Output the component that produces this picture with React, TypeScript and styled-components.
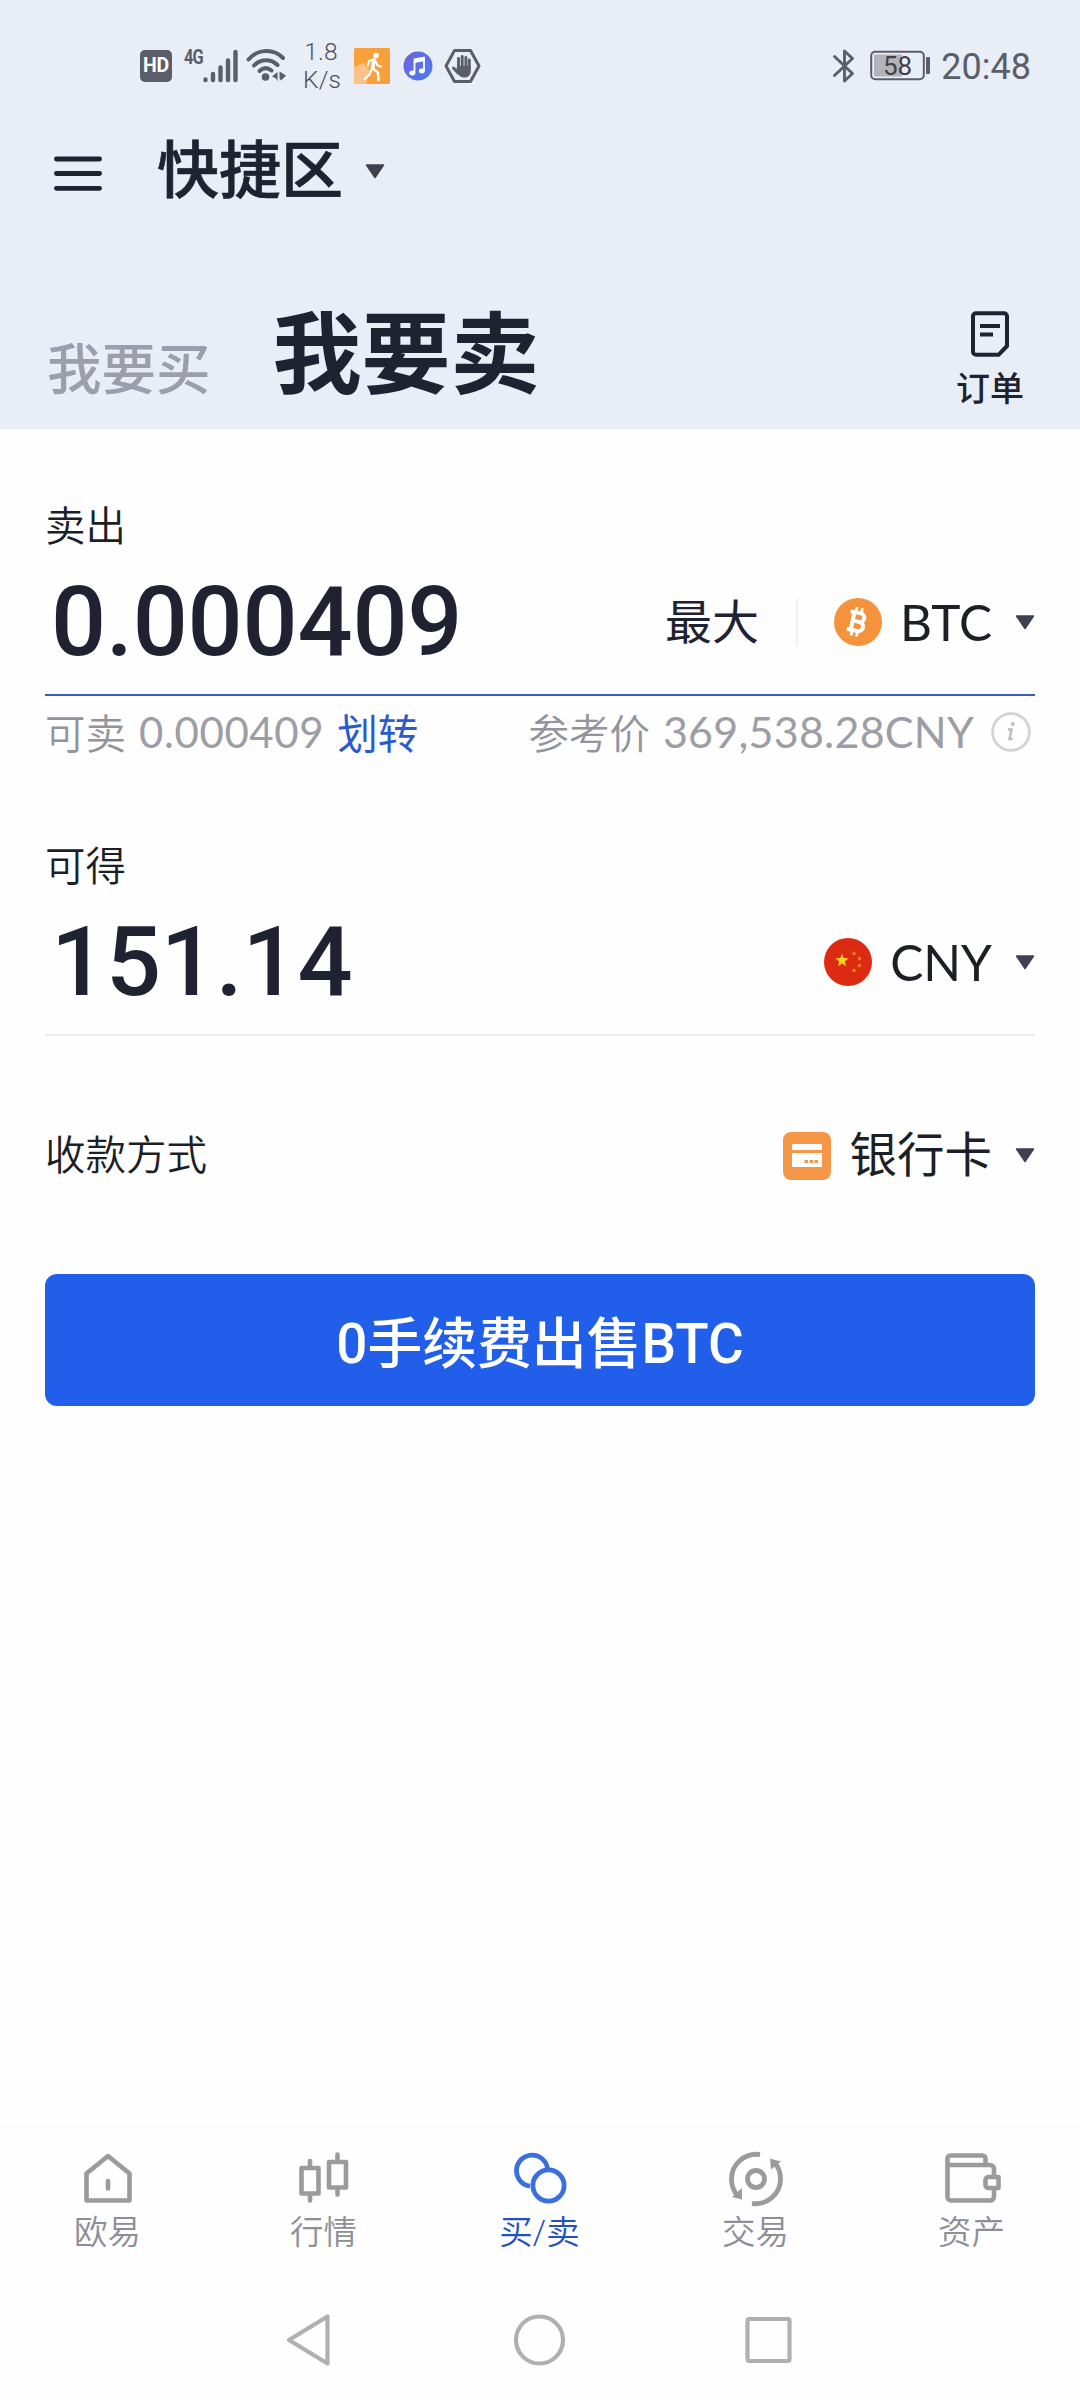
import React from 'react';
import styled, { createGlobalStyle } from 'styled-components';

const ui = '"Roboto", "Noto Sans CJK SC", sans-serif';
const geo = '"Lato", "Noto Sans CJK SC", sans-serif';
const cjk = '"Noto Sans CJK SC", sans-serif';
const ink = '#1f2230';
const status = '#5b5e68';

const GlobalStyle = createGlobalStyle`
  * { box-sizing: border-box; }
  body { margin: 0; background: #fdfdfe; font-family: ${ui}; }
  svg { display: block; flex: none; overflow: visible; }
`;

const Screen = styled.div`
  width: 1080px;
  height: 2400px;
  display: flex;
  flex-direction: column;
  background: #fefefe;
  color: ${ink};
  overflow: hidden;
`;

const Header = styled.header`
  height: 429px;
  flex: none;
  display: flex;
  flex-direction: column;
  background: #e9edf6;
`;

const StatusBar = styled.div`
  height: 131px;
  padding: 0 49px 0 140px;
  display: flex;
  align-items: center;
  color: ${status};
`;

const StatusGroup = styled.div`
  display: flex;
  align-items: center;
`;

const Gap = styled.span<{ $w: number }>`
  width: ${p => p.$w}px;
  flex: none;
`;

const Network = styled.div`
  display: flex;
  align-items: flex-start;
  height: 34px;
`;

const Generation = styled.span`
  width: 19px;
  font-size: 21px;
  line-height: 16px;
  font-weight: 700;
  letter-spacing: -1px;
  transform: scaleX(0.78);
  transform-origin: left;
`;

const HdBadge = styled.span`
  width: 32px;
  height: 32px;
  border-radius: 5px;
  background: ${status};
  color: #fff;
  font-size: 19.5px;
  line-height: 32px;
  font-weight: 700;
  text-align: center;
  letter-spacing: -0.3px;
`;

const Speed = styled.div`
  width: 36px;
  font-size: 24.5px;
  line-height: 28px;
  font-weight: 300;
  text-align: center;
  letter-spacing: 0.2px;
  color: #4c4f58;
`;

const Clock = styled.div`
  font-size: 36px;
  line-height: 40px;
  margin-top: 2px;
`;

const Spacer = styled.div`
  flex: 1;
`;

const TitleRow = styled.div`
  height: 82px;
  padding-left: 54px;
  display: flex;
  align-items: center;
`;

const Title = styled.h1`
  margin: 0 22px 0 55px;
  font-size: 62px;
  line-height: 80px;
  font-weight: 500;
  -webkit-text-stroke: 0.7px ${ink};
`;

const CaretLift = styled.span`
  padding-bottom: 2px;
`;

const TabsRow = styled.div`
  flex: 1;
  padding: 0 53px 0 47px;
  display: flex;
  align-items: flex-end;
`;

const SideTab = styled.span<{ $active?: boolean }>`
  font-size: ${p => (p.$active ? 89 : 54.5)}px;
  line-height: 1;
  font-weight: ${p => (p.$active ? 700 : 500)};
  color: ${p => (p.$active ? ink : '#9c9eab')};
  margin: 0 0 ${p => (p.$active ? 29 : 32)}px ${p => (p.$active ? 62 : 0)}px;
`;

const Orders = styled.div`
  display: flex;
  flex-direction: column;
  align-items: center;
  gap: 13px;
  margin: 0 3px 21px 0;
  font-size: 34px;
  line-height: 38px;
  font-weight: 500;
`;

const Form = styled.main`
  padding: 78px 45px 0;
  flex: 1;
`;

const Label = styled.div`
  font-size: 40.5px;
  line-height: 40px;
  font-weight: 350;
  color: #1d1f26;
`;

const AmountRow = styled.div<{ $focus?: boolean }>`
  height: 149px;
  padding: 3px 0 0 6px;
  display: flex;
  align-items: center;
  border-bottom: ${p => (p.$focus ? '2px solid #3a5cba' : '2px solid #ededee')};
`;

const Amount = styled.div`
  font-size: 97px;
  line-height: 142px;
  font-weight: 500;
  letter-spacing: -0.2px;
  flex: 1;
`;

const Option = styled.span`
  padding-top: 2px;
  font-size: 47px;
  line-height: 60px;
`;

const Divider = styled.span`
  width: 2px;
  height: 48px;
  margin: 0 36px 0 37px;
  background: #efeff1;
`;

const Picker = styled.div`
  display: flex;
  align-items: center;
  line-height: 60px;
  color: #1d1f26;
`;

const PickerText = styled.span<{ $cjk?: boolean }>`
  margin: 0 23px 0 ${p => (p.$cjk ? 19 : 18)}px;
  padding-top: ${p => (p.$cjk ? 1 : 0)}px;
  font-family: ${p => (p.$cjk ? ui : geo)};
  font-size: ${p => (p.$cjk ? 47.5 : 49.5)}px;
`;

const InfoRow = styled.div`
  height: 72px;
  margin-bottom: 79px;
  display: flex;
  align-items: center;
  font-family: ${cjk};
  font-size: 40.5px;
  line-height: 60px;
  font-weight: 350;
  color: #93939c;
  white-space: pre;
`;

const Figures = styled.span<{ $size: number; $track: number }>`
  margin-left: 13px;
  font-family: ${geo};
  font-weight: 400;
  font-size: ${p => p.$size}px;
  letter-spacing: ${p => p.$track}px;
  color: #9d9da5;
`;

const Link = styled.a`
  margin-left: 13px;
  font-weight: 400;
  color: #2b5bcb;
`;

const MethodRow = styled.div`
  height: 238px;
  padding-top: 1px;
  display: flex;
  align-items: center;
  justify-content: space-between;
`;

const SellButton = styled.button`
  width: 100%;
  height: 132px;
  display: block;
  border: 0;
  border-radius: 12px;
  background: #215eea;
  color: #fff;
  font-family: ${ui};
  font-size: 54.8px;
  line-height: 60px;
  font-weight: 500;
  padding: 7px 0 0;
`;

const TabBar = styled.nav`
  height: 154px;
  flex: none;
  display: grid;
  grid-template-columns: repeat(5, 1fr);
  border-top: 1px solid #fafafb;
`;

const TabItem = styled.div<{ $active?: boolean }>`
  display: flex;
  flex-direction: column;
  align-items: center;
  padding: 24px 0 0;
  gap: 8px;
  font-size: 33.5px;
  line-height: 36px;
  font-weight: 350;
  color: ${p => (p.$active ? '#2551bd' : '#8e8e98')};
`;

const TabLabel = styled.span`
  margin-right: 1px;
`;

const SystemNav = styled.div`
  height: 120px;
  flex: none;
  padding: 0 287px 0 286px;
  display: flex;
  align-items: center;
  justify-content: space-between;
`;

const Caret = () => (
  <svg width="20" height="15" viewBox="0 0 20 15">
    <path d="M1.500 1h17L10 13.500z" fill="#3f4050" stroke="#3f4050" strokeWidth="1.500" strokeLinejoin="round" />
  </svg>
);

const SignalIcon = () => (
  <svg width="35" height="34" viewBox="0 0 35 34">
    <g stroke={status} strokeWidth="4.400" strokeLinecap="round">
      <path d="M2.500 30.500v.5M10 25v6M17.500 18.500V31M25 11.500V31M32.500 3v28" />
    </g>
  </svg>
);

const WifiIcon = () => (
  <svg width="42" height="34" viewBox="0 0 42 34">
    <g fill="none" stroke={status} strokeWidth="4" strokeLinecap="round">
      <path d="M2.500 10.500C12-.5 28-.5 37 9" />
      <path d="M8 16.500c6.500-7 17-7 23.500-.5" />
      <path d="M13.500 22c3.500-3.500 8-3.500 12-.5" />
    </g>
    <circle cx="19.500" cy="28" r="3.800" fill={status} />
    <path d="M31.500 23v9.500l-1.500-3-4-2zM33.500 22.500l6.500 4-5 5-1.500-2z" fill={status} />
  </svg>
);

const RunIcon = () => (
  <svg width="38" height="38" viewBox="0 0 38 38">
    <rect x="1" y="1" width="36" height="36" rx="1.500" fill="#f8a13c" />
    <path d="M1 20l10-4 6 8-4 13H1z" fill="#fbc287" />
    <circle cx="23" cy="8.500" r="2.800" fill="#fff" />
    <g fill="none" stroke="#fff" strokeLinecap="round" strokeLinejoin="round">
      <path d="M21 13l-1.500 8" strokeWidth="4" />
      <path d="M19.500 21.500l5.500 4 .5 7.500" strokeWidth="2.500" />
      <path d="M19 22l-2.500 5.500-5 4.500M20.500 12.500l-4.500 1.500-1 4.500M22.500 14l2 4.500 3.500 1" strokeWidth="2" />
    </g>
  </svg>
);

const MusicIcon = () => (
  <svg width="32" height="32" viewBox="0 0 32 32">
    <defs>
      <linearGradient id="music" x1="0" y1="0" x2="1" y2="1">
        <stop offset="0" stopColor="#6f62dc" />
        <stop offset="1" stopColor="#4a7cf0" />
      </linearGradient>
    </defs>
    <circle cx="16" cy="16" r="14.500" fill="url(#music)" />
    <path d="M12.500 23V9.500l9.500-2V21" fill="none" stroke="#fff" strokeWidth="1.800" />
    <path d="M12.500 11.500l9.500-2" stroke="#fff" strokeWidth="3" />
    <ellipse cx="10.300" cy="23" rx="3" ry="2.400" fill="#fff" />
    <ellipse cx="19.800" cy="21" rx="3" ry="2.400" fill="#fff" />
  </svg>
);

const HandIcon = () => (
  <svg width="37" height="36" viewBox="0 0 37 36">
    <path d="M10.500 2.500h16L35 18l-8.500 15.500h-16L2 18z" fill="none" stroke={status} strokeWidth="3" strokeLinejoin="round" />
    <g stroke={status} strokeWidth="2.900" strokeLinecap="round">
      <path d="M14.500 20v-9.500M18.200 20V8.500M21.900 20V9.500M25.300 21v-9M14 25l-4.500-5" />
    </g>
    <path d="M13 18h13.700v5c0 4-2.500 6.500-6 6.500-4 0-5.500-1.500-8.500-6z" fill={status} />
  </svg>
);

const BluetoothIcon = () => (
  <svg width="24" height="36" viewBox="0 0 24 36">
    <path d="M2.500 8.500L20.500 25.500 12.500 33V3l8 7.500L2.500 27.500" fill="none" stroke={status} strokeWidth="2.900" strokeLinejoin="round" strokeLinecap="round" />
  </svg>
);

const BatteryIcon = () => (
  <svg width="60" height="31" viewBox="0 0 60 31">
    <rect x="1.200" y="1.700" width="52.600" height="27.600" rx="4" fill="none" stroke={status} strokeWidth="2" />
    <rect x="4" y="4.500" width="28" height="22" fill="#b3b4ba" />
    <text x="27.500" y="24.800" textAnchor="middle" fontFamily="Roboto" fontSize="26" fill="#3f4149">58</text>
    <rect x="56" y="7" width="4" height="17" rx="1" fill={status} />
  </svg>
);

const MenuIcon = () => (
  <svg width="48" height="36" viewBox="0 0 48 36">
    <path d="M2.400 5h43.200M2.400 19.500h43.200M2.400 34.300h43.200" stroke={ink} strokeWidth="4.800" strokeLinecap="round" />
  </svg>
);

const OrderIcon = () => (
  <svg width="38" height="46" viewBox="0 0 38 46">
    <path d="M5 2.200h28a3 3 0 0 1 3 3V35l-8.500 8.800H5a3 3 0 0 1-3-3V5.200a3 3 0 0 1 3-3z" fill="none" stroke={ink} strokeWidth="4" strokeLinejoin="round" />
    <path d="M9 15h20M9 23.500h13" stroke={ink} strokeWidth="4" />
  </svg>
);

const BtcIcon = () => (
  <svg width="48" height="48" viewBox="0 0 48 48">
    <circle cx="24" cy="24" r="24" fill="#f4933c" />
    <g transform="rotate(12 24 24)" fill="none" stroke="#fff">
      <path d="M18.500 15v18M14.500 15h10.500a4.300 4.300 0 0 1 0 8.700h-6M19 23.700h7a4.700 4.700 0 0 1 0 9.300H14.500" strokeWidth="4" />
      <path d="M20 9.500V15M25.500 9.500V15M20 33v5.500M25.500 33v5.500" strokeWidth="2.800" />
    </g>
  </svg>
);

const star = (cx: number, cy: number, r: number) =>
  Array.from({ length: 10 }, (_, i) => {
    const a = (i * Math.PI) / 5 - Math.PI / 2;
    const q = i % 2 ? r * 0.42 : r;
    return `${cx + q * Math.cos(a)},${cy + q * Math.sin(a)}`;
  }).join(' ');

const FlagIcon = () => (
  <svg width="48" height="48" viewBox="0 0 48 48">
    <circle cx="24" cy="24" r="24" fill="#dd2a12" />
    <polygon points={star(18, 22.500, 7)} fill="#fbd21c" />
    {[[30, 15.500], [35.500, 20.500], [35.500, 27.500], [30, 32.500]].map(([x, y]) => (
      <polygon key={y} points={star(x, y, 2.500)} fill="#f7a51c" />
    ))}
  </svg>
);

const CardIcon = () => (
  <svg width="48" height="48" viewBox="0 0 48 48">
    <rect width="48" height="48" rx="8" fill="#f59746" />
    <path d="M9 12h30v6H9zM9 21h30v14H9z" fill="#fff" />
    <path d="M21.500 29.500h3.500M26.500 29.500h3.500M31.500 29.500h3.500" stroke="#f59746" strokeWidth="2.800" />
  </svg>
);

const InfoIcon = () => (
  <svg width="40" height="40" viewBox="0 0 40 40">
    <circle cx="20" cy="20" r="18.400" fill="none" stroke="#d3d3d6" strokeWidth="2.800" />
    <circle cx="21.800" cy="12" r="1.900" fill="#bcbcc0" />
    <path d="M17 17.500h3.500L18.500 27h3" fill="none" stroke="#bcbcc0" strokeWidth="2.400" />
  </svg>
);

const line = { fill: 'none', stroke: '#9b9b9c', strokeWidth: 4.6, strokeLinejoin: 'round', strokeLinecap: 'round' } as const;

const HomeIcon = () => (
  <svg width="54" height="56" viewBox="0 0 54 56" {...line}>
    <path d="M5.500 22.500L27 5l21.500 17.500V49.500h-43zM27 30v7.500" />
  </svg>
);

const MarketIcon = () => (
  <svg width="54" height="56" viewBox="0 0 54 56" {...line}>
    <path d="M4.500 17h17v25.500h-17zM32 11h17v25.500H32zM13 10v7M13 42.500v7M40.500 3.500V11M40.500 36.500v7" />
  </svg>
);

const SwapIcon = () => (
  <svg width="54" height="56" viewBox="0 0 54 56" fill="none" stroke="#3a70de" strokeWidth="4.800">
    <path d="M17 35.200A15.600 15.600 0 1 1 34.600 18" />
    <circle cx="35.500" cy="34.500" r="15.600" />
  </svg>
);

const TradeIcon = () => (
  <svg width="54" height="56" viewBox="0 0 54 56" fill="none" stroke="#9b9b9c" strokeWidth="4.800">
    <path d="M31 3.500C16 1.500 2.500 13 2.500 28c0 7 2.500 12.500 6 16.500M23 52.500C38 54.500 51.500 43 51.500 28c0-7-2.500-12.500-6-16.500" />
    <circle cx="27" cy="28" r="8.500" />
    <path d="M41 7.500l11 3-10 8zM13 48.500L3 46l10-9z" fill="#9b9b9c" stroke="none" />
  </svg>
);

const WalletIcon = () => (
  <svg width="56" height="56" viewBox="0 0 56 56" {...line}>
    <path d="M41.500 13V7.500a3 3 0 0 0-3-3H6.500a3 3 0 0 0-3 3V46a3.500 3.500 0 0 0 3.500 3.500h39a4 4 0 0 0 4-4V39M3.500 14H46a4 4 0 0 1 4 4V25" />
    <path d="M54.500 26H44.500a3 3 0 0 0-3 3v5a3 3 0 0 0 3 3H54.500z" />
  </svg>
);

const tabs = [
  { label: '欧易', icon: <HomeIcon /> },
  { label: '行情', icon: <MarketIcon /> },
  { label: '买/卖', icon: <SwapIcon />, active: true },
  { label: '交易', icon: <TradeIcon /> },
  { label: '资产', icon: <WalletIcon /> },
];

export default function App() {
  return (
    <Screen>
      <GlobalStyle />
      <Header>
        <StatusBar>
          <StatusGroup>
            <HdBadge>HD</HdBadge>
            <Gap $w={12} />
            <Network>
              <Generation>4G</Generation>
              <SignalIcon />
            </Network>
            <Gap $w={8} />
            <WifiIcon />
            <Gap $w={15} />
            <Speed>1.8 K/s</Speed>
            <Gap $w={14} />
            <RunIcon />
            <Gap $w={11} />
            <MusicIcon />
            <Gap $w={10} />
            <HandIcon />
          </StatusGroup>
          <Spacer />
          <StatusGroup>
            <BluetoothIcon />
            <Gap $w={14} />
            <BatteryIcon />
            <Gap $w={11} />
            <Clock>20:48</Clock>
          </StatusGroup>
        </StatusBar>
        <TitleRow>
          <MenuIcon />
          <Title>快捷区</Title>
          <CaretLift>
            <Caret />
          </CaretLift>
        </TitleRow>
        <TabsRow>
          <SideTab>我要买</SideTab>
          <SideTab $active>我要卖</SideTab>
          <Spacer />
          <Orders>
            <OrderIcon />
            <span>订单</span>
          </Orders>
        </TabsRow>
      </Header>

      <Form>
        <Label>卖出</Label>
        <AmountRow $focus>
          <Amount>0.000409</Amount>
          <Option>最大</Option>
          <Divider />
          <Picker>
            <BtcIcon />
            <PickerText>BTC</PickerText>
            <Caret />
          </Picker>
        </AmountRow>
        <InfoRow>
          <span>可卖</span>
          <Figures $size={42} $track={0.6}>0.000409</Figures>
          <Link>划转</Link>
          <Spacer />
          <span>参考价</span>
          <Figures $size={43} $track={0.25}>369,538.28CNY</Figures>
          <Gap $w={17} />
          <InfoIcon />
          <Gap $w={4} />
        </InfoRow>

        <Label>可得</Label>
        <AmountRow>
          <Amount>151.14</Amount>
          <Picker>
            <FlagIcon />
            <PickerText>CNY</PickerText>
            <Caret />
          </Picker>
        </AmountRow>

        <MethodRow>
          <Label>收款方式</Label>
          <Picker>
            <CardIcon />
            <PickerText $cjk>银行卡</PickerText>
            <Caret />
          </Picker>
        </MethodRow>

        <SellButton>0手续费出售BTC</SellButton>
      </Form>

      <TabBar>
        {tabs.map(t => (
          <TabItem key={t.label} $active={t.active}>
            {t.icon}
            <TabLabel>{t.label}</TabLabel>
          </TabItem>
        ))}
      </TabBar>
      <SystemNav>
        <svg width="45" height="54" viewBox="0 0 45 54">
          <path d="M41.500 3.500v47L3 27z" fill="none" stroke="#b0b0b0" strokeWidth="4.200" strokeLinejoin="round" />
        </svg>
        <svg width="52" height="52" viewBox="0 0 52 52">
          <circle cx="27.500" cy="26" r="23.500" fill="none" stroke="#b0b0b0" strokeWidth="4.200" />
        </svg>
        <svg width="48" height="48" viewBox="0 0 48 48">
          <rect x="2.500" y="3" width="42" height="42" rx="1.500" fill="none" stroke="#b0b0b0" strokeWidth="4.200" />
        </svg>
      </SystemNav>
    </Screen>
  );
}
